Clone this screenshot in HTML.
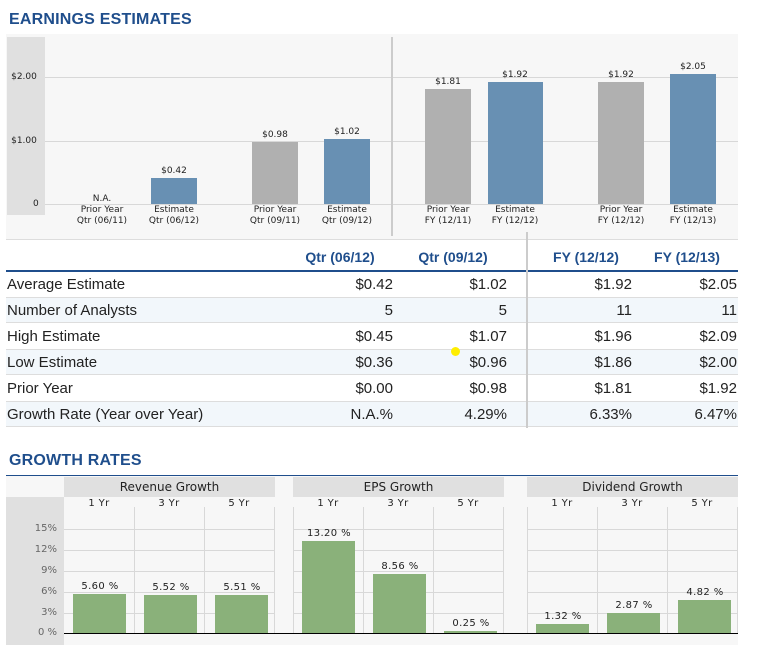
<!DOCTYPE html>
<html><head><meta charset="utf-8"><style>
*{margin:0;padding:0;box-sizing:border-box}
body{width:764px;height:645px;background:#fff;position:relative;overflow:hidden;font-family:"Liberation Sans",Arial,sans-serif}
.a{position:absolute}
.h{font-weight:bold;color:#1f4e8c;font-size:16px;letter-spacing:0.2px}
.s{font-family:"DejaVu Sans",sans-serif;font-size:9px;color:#222;text-align:center;line-height:11px}
.bl{background:#6890b3}.gr{background:#b0b0b0}.gn{background:#8ab17a}
.gl{height:1px;background:#d8d8d8}
.vl{width:1px;background:#d8d8d8}
.t{font-size:15px;color:#222}
.th{font-size:14px;font-weight:bold;color:#1f4e8c}
.r{text-align:right}
.v{font-family:"DejaVu Sans",sans-serif;font-size:10px;color:#222;text-align:center;letter-spacing:0.4px}
.ax{font-family:"DejaVu Sans",sans-serif;font-size:10px;color:#666;text-align:right;width:51px}
</style></head><body>
<div class="a h" style="left:9px;top:11px">EARNINGS ESTIMATES</div>
<div class="a" style="left:6px;top:34px;width:732px;height:206px;background:#f7f7f7;border-bottom:1px solid #ddd"></div>
<div class="a" style="left:7px;top:37px;width:38px;height:178px;background:#e0e0e0"></div>
<div class="a gl" style="left:45px;top:77px;width:693px"></div>
<div class="a gl" style="left:45px;top:141px;width:693px"></div>
<div class="a gl" style="left:45px;top:204px;width:693px"></div>
<div class="a" style="left:391px;top:37px;width:2px;height:199px;background:#ccc"></div>
<div class="a s" style="left:9px;top:72px;width:30px;text-align:center">$2.00</div>
<div class="a s" style="left:9px;top:136px;width:30px">$1.00</div>
<div class="a s" style="left:9px;top:199px;width:48px;text-align:left;padding-left:24px">0</div>
<div class="a bl" style="left:151px;top:178px;width:46px;height:26px"></div>
<div class="a gr" style="left:252px;top:142px;width:46px;height:62px"></div>
<div class="a bl" style="left:324px;top:139px;width:46px;height:65px"></div>
<div class="a gr" style="left:425px;top:89px;width:46px;height:115px"></div>
<div class="a bl" style="left:488px;top:82px;width:55px;height:122px"></div>
<div class="a gr" style="left:598px;top:82px;width:46px;height:122px"></div>
<div class="a bl" style="left:670px;top:74px;width:46px;height:130px"></div>
<div class="a s" style="left:144px;top:166px;width:60px">$0.42</div>
<div class="a s" style="left:245px;top:130px;width:60px">$0.98</div>
<div class="a s" style="left:317px;top:127px;width:60px">$1.02</div>
<div class="a s" style="left:418px;top:77px;width:60px">$1.81</div>
<div class="a s" style="left:485px;top:70px;width:60px">$1.92</div>
<div class="a s" style="left:591px;top:70px;width:60px">$1.92</div>
<div class="a s" style="left:663px;top:62px;width:60px">$2.05</div>
<div class="a s" style="left:70px;top:194px;width:64px">N.A.<br>Prior Year<br>Qtr (06/11)</div>
<div class="a s" style="left:142px;top:205px;width:64px">Estimate<br>Qtr (06/12)</div>
<div class="a s" style="left:243px;top:205px;width:64px">Prior Year<br>Qtr (09/11)</div>
<div class="a s" style="left:315px;top:205px;width:64px">Estimate<br>Qtr (09/12)</div>
<div class="a s" style="left:416px;top:205px;width:64px">Prior Year<br>FY (12/11)</div>
<div class="a s" style="left:483px;top:205px;width:64px">Estimate<br>FY (12/12)</div>
<div class="a s" style="left:589px;top:205px;width:64px">Prior Year<br>FY (12/12)</div>
<div class="a s" style="left:661px;top:205px;width:64px">Estimate<br>FY (12/13)</div>
<div class="a" style="left:6px;top:270px;width:732px;height:2px;background:#1f4e8c"></div>
<div class="a th" style="left:290px;top:249px;width:100px;text-align:center">Qtr (06/12)</div>
<div class="a th" style="left:403px;top:249px;width:100px;text-align:center">Qtr (09/12)</div>
<div class="a th" style="left:536px;top:249px;width:100px;text-align:center">FY (12/12)</div>
<div class="a th" style="left:637px;top:249px;width:100px;text-align:center">FY (12/13)</div>
<div class="a" style="left:6px;top:297px;width:732px;height:26px;background:#f2f7fb;border-top:1px solid #ddd;border-bottom:1px solid #ddd"></div>
<div class="a" style="left:6px;top:349px;width:732px;height:26px;background:#f2f7fb;border-top:1px solid #ddd;border-bottom:1px solid #ddd"></div>
<div class="a" style="left:6px;top:401px;width:732px;height:26px;background:#f2f7fb;border-top:1px solid #ddd;border-bottom:1px solid #ddd"></div>
<div class="a" style="left:526px;top:232px;width:2px;height:196px;background:#ccc"></div>
<div class="a" style="left:451px;top:347px;width:9px;height:9px;border-radius:50%;background:#ffee00"></div>
<div class="a" style="left:7px;top:272px;line-height:26px">
<div class="t">Average Estimate</div><div class="t">Number of Analysts</div><div class="t">High Estimate</div><div class="t">Low Estimate</div><div class="t">Prior Year</div><div class="t">Growth Rate (Year over Year)</div></div>
<div class="a r" style="left:293px;top:272px;width:100px;line-height:26px"><div class="t">$0.42</div><div class="t">5</div><div class="t">$0.45</div><div class="t">$0.36</div><div class="t">$0.00</div><div class="t">N.A.%</div></div>
<div class="a r" style="left:407px;top:272px;width:100px;line-height:26px"><div class="t">$1.02</div><div class="t">5</div><div class="t">$1.07</div><div class="t">$0.96</div><div class="t">$0.98</div><div class="t">4.29%</div></div>
<div class="a r" style="left:532px;top:272px;width:100px;line-height:26px"><div class="t">$1.92</div><div class="t">11</div><div class="t">$1.96</div><div class="t">$1.86</div><div class="t">$1.81</div><div class="t">6.33%</div></div>
<div class="a r" style="left:637px;top:272px;width:100px;line-height:26px"><div class="t">$2.05</div><div class="t">11</div><div class="t">$2.09</div><div class="t">$2.00</div><div class="t">$1.92</div><div class="t">6.47%</div></div>
<div class="a h" style="left:9px;top:452px">GROWTH RATES</div>
<div class="a" style="left:6px;top:475px;width:732px;height:1px;background:#1f4e8c"></div>
<div class="a" style="left:6px;top:476px;width:732px;height:169px;background:#f7f7f7"></div>
<div class="a" style="left:6px;top:497px;width:58px;height:148px;background:#e0e0e0"></div>
<div class="a" style="left:64px;top:477px;width:211px;height:20px;background:#e0e0e0;font-family:'DejaVu Sans',sans-serif;font-size:12px;text-align:center;line-height:21px;color:#222">Revenue Growth</div>
<div class="a" style="left:293px;top:477px;width:211px;height:20px;background:#e0e0e0;font-family:'DejaVu Sans',sans-serif;font-size:12px;text-align:center;line-height:21px;color:#222">EPS Growth</div>
<div class="a" style="left:527px;top:477px;width:211px;height:20px;background:#e0e0e0;font-family:'DejaVu Sans',sans-serif;font-size:12px;text-align:center;line-height:21px;color:#222">Dividend Growth</div>
<div class="a gl" style="left:64px;top:529px;width:211px"></div><div class="a gl" style="left:293px;top:529px;width:211px"></div><div class="a gl" style="left:527px;top:529px;width:211px"></div>
<div class="a gl" style="left:64px;top:550px;width:211px"></div><div class="a gl" style="left:293px;top:550px;width:211px"></div><div class="a gl" style="left:527px;top:550px;width:211px"></div>
<div class="a gl" style="left:64px;top:571px;width:211px"></div><div class="a gl" style="left:293px;top:571px;width:211px"></div><div class="a gl" style="left:527px;top:571px;width:211px"></div>
<div class="a gl" style="left:64px;top:592px;width:211px"></div><div class="a gl" style="left:293px;top:592px;width:211px"></div><div class="a gl" style="left:527px;top:592px;width:211px"></div>
<div class="a gl" style="left:64px;top:613px;width:211px"></div><div class="a gl" style="left:293px;top:613px;width:211px"></div><div class="a gl" style="left:527px;top:613px;width:211px"></div>
<div class="a vl" style="left:134px;top:507px;height:126px"></div><div class="a vl" style="left:204px;top:507px;height:126px"></div><div class="a vl" style="left:274px;top:507px;height:126px"></div>
<div class="a vl" style="left:293px;top:507px;height:126px"></div><div class="a vl" style="left:363px;top:507px;height:126px"></div><div class="a vl" style="left:433px;top:507px;height:126px"></div><div class="a vl" style="left:503px;top:507px;height:126px"></div>
<div class="a vl" style="left:527px;top:507px;height:126px"></div><div class="a vl" style="left:597px;top:507px;height:126px"></div><div class="a vl" style="left:667px;top:507px;height:126px"></div><div class="a vl" style="left:737px;top:507px;height:126px"></div>
<div class="a ax" style="left:6px;top:523px">15%</div>
<div class="a ax" style="left:6px;top:544px">12%</div>
<div class="a ax" style="left:6px;top:565px">9%</div>
<div class="a ax" style="left:6px;top:586px">6%</div>
<div class="a ax" style="left:6px;top:607px">3%</div>
<div class="a ax" style="left:6px;top:627px">0 %</div>
<div class="a v" style="left:69px;top:498px;width:60px">1 Yr</div><div class="a v" style="left:139px;top:498px;width:60px">3 Yr</div><div class="a v" style="left:209px;top:498px;width:60px">5 Yr</div>
<div class="a v" style="left:298px;top:498px;width:60px">1 Yr</div><div class="a v" style="left:368px;top:498px;width:60px">3 Yr</div><div class="a v" style="left:438px;top:498px;width:60px">5 Yr</div>
<div class="a v" style="left:532px;top:498px;width:60px">1 Yr</div><div class="a v" style="left:602px;top:498px;width:60px">3 Yr</div><div class="a v" style="left:672px;top:498px;width:60px">5 Yr</div>
<div class="a gn" style="left:73px;top:594px;width:53px;height:39px"></div>
<div class="a gn" style="left:144px;top:595px;width:53px;height:38px"></div>
<div class="a gn" style="left:215px;top:595px;width:53px;height:38px"></div>
<div class="a gn" style="left:302px;top:541px;width:53px;height:92px"></div>
<div class="a gn" style="left:373px;top:574px;width:53px;height:59px"></div>
<div class="a gn" style="left:444px;top:631px;width:53px;height:2px"></div>
<div class="a gn" style="left:536px;top:624px;width:53px;height:9px"></div>
<div class="a gn" style="left:607px;top:613px;width:53px;height:20px"></div>
<div class="a gn" style="left:678px;top:600px;width:53px;height:33px"></div>
<div class="a" style="left:64px;top:633px;width:674px;height:1px;background:#000"></div>
<div class="a v" style="left:65px;top:581px;width:70px">5.60 %</div>
<div class="a v" style="left:136px;top:582px;width:70px">5.52 %</div>
<div class="a v" style="left:207px;top:582px;width:70px">5.51 %</div>
<div class="a v" style="left:294px;top:528px;width:70px">13.20 %</div>
<div class="a v" style="left:365px;top:561px;width:70px">8.56 %</div>
<div class="a v" style="left:436px;top:618px;width:70px">0.25 %</div>
<div class="a v" style="left:528px;top:611px;width:70px">1.32 %</div>
<div class="a v" style="left:599px;top:600px;width:70px">2.87 %</div>
<div class="a v" style="left:670px;top:587px;width:70px">4.82 %</div>
</body></html>
